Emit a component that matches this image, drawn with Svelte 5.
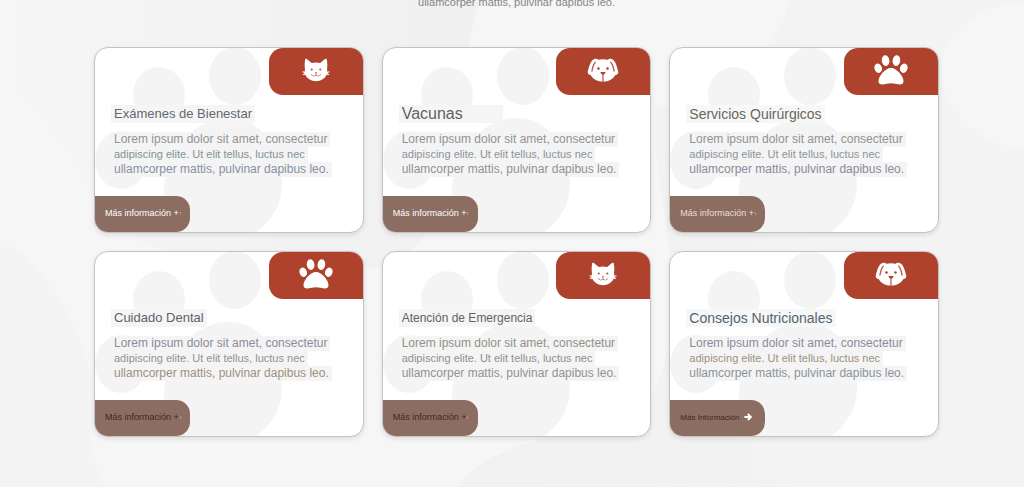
<script>
  const services = [
    { title: 'Exámenes de Bienestar', icon: 'cat', heading: 'slate', lines: ['gray', 'teal', 'blue'], button: 'light', label: 'Más información +' },
    { title: 'Vacunas', icon: 'dog', heading: 'neutral wide', lines: ['gray', 'slate', 'gray'], button: 'light', label: 'Más información +' },
    { title: 'Servicios Quirúrgicos', icon: 'paw', heading: 'brown tint', lines: ['gray', 'slate', 'violet'], button: 'soft', label: 'Más información +' },
    { title: 'Cuidado Dental', icon: 'paw', heading: 'violet', lines: ['violet', 'gray', 'sand'], button: 'dark', label: 'Más información +' },
    { title: 'Atención de Emergencia', icon: 'cat', heading: 'neutral narrow', lines: ['olive', 'green', 'gray'], button: 'dark', label: 'Más información +' },
    { title: 'Consejos Nutricionales', icon: 'dog', heading: 'navy tint', lines: ['violet', 'sand', 'slate'], button: 'dark next', label: 'Más Información', arrow: true }
  ];
  const copy = [
    'Lorem ipsum dolor sit amet, consectetur',
    'adipiscing elite. Ut elit tellus, luctus nec',
    'ullamcorper mattis, pulvinar dapibus leo.'
  ];
</script>

<main>
  <svg class="backdrop" viewBox="0 0 1024 487" preserveAspectRatio="none" aria-hidden="true">
    <defs>
      <linearGradient id="band" x1="0" x2="1" y1="0" y2="0">
        <stop offset="0" stop-color="#f6f6f6" />
        <stop offset="1" stop-color="#f0f0f0" />
      </linearGradient>
      <linearGradient id="low" x1="0" x2="1" y1="0" y2="0">
        <stop offset="0" stop-color="#f1f1f1" />
        <stop offset="1" stop-color="#f4f4f4" />
      </linearGradient>
    </defs>
    <path d="M0 0H480C464 50 462 90 462 130C460 200 420 262 372 268C250 260 150 262 130 232C90 200 60 120 0 80Z" fill="url(#band)" />
    <path d="M790 0C780 50 730 85 655 110C650 200 700 300 650 400C570 440 490 440 457 487H1024V150C950 140 925 70 950 40C970 15 990 4 1024 3V0Z" fill="url(#low)" />
    <path d="M0 240C60 270 110 380 90 436C92 460 100 475 106 487H0Z" fill="#f4f4f4" />
  </svg>

  <p class="intro">ullamcorper mattis, pulvinar dapibus leo.</p>

  <section class="grid">
    {#each services as service}
      <article class="card">
        <svg class="watermark" viewBox="0 0 190 188" width="190" height="188" aria-hidden="true">
          <ellipse cx="64" cy="47" rx="26" ry="28" />
          <ellipse cx="140" cy="28" rx="26" ry="29" />
          <ellipse cx="26" cy="112" rx="26" ry="29" />
          <path d="M70 190C68 172 68 156 69 140C73 99 101 70 134 70C166 70 187 100 187 136C187 156 178 172 158 187V190Z" />
        </svg>
        <div class="badge">
          {#if service.icon === 'cat'}
            <svg viewBox="0 0 28 24" width="28" height="24" aria-hidden="true">
              <path fill="#fff" d="M3.2 1.2C3.6.3 4.6.7 5.2 1.3L9.6 4.9Q14 4 18.2 4.9L22.6 1.3C23.3.6 24.3.4 24.7 1.2C25.6 4.8 25.4 8 25 11.3Q25.4 12.6 25.3 13.8L27.5 13.3V14.2L25.3 15L27.4 16.4L27 17.1L24.6 16.8C22.8 21 18.4 23.2 14 23.2S5.2 21 3.4 16.8L1 17.1L.6 16.4L2.7 15L.5 14.2V13.3L2.7 13.8Q2.6 12.6 3 11.3C2.6 8 2.4 4.8 3.2 1.2Z" />
              <circle cx="9.7" cy="11.5" r="1.1" fill="#b65542" />
              <circle cx="18.3" cy="11.5" r="1.1" fill="#b65542" />
              <path d="M12.8 14.3H15.2L14 15.8Z" fill="#b65542" />
              <path d="M14 15.5V17M9.2 16.8Q11.5 19.4 14 17.2Q16.5 19.4 18.8 16.8" fill="none" stroke="#c8705e" stroke-width=".8" stroke-linecap="round" />
            </svg>
          {:else if service.icon === 'dog'}
            <svg viewBox="0 0 32 24" width="32" height="24" aria-hidden="true">
              <path fill="#fff" d="M8 .8C9.4.5 10.6 1 11.2 1.7Q16 .6 20.8 1.7C21.4 1 22.6.5 24 .8C28.7 2 30 9 31.3 14C31.5 15.5 30.2 17 28.4 17C26 21.4 21 23.6 16 23.6S6 21.4 3.6 17C1.8 17 .4 15.5.7 14C2 9 3.3 2 8 .8Z" />
              <path d="M8.3 4.2C6.2 6 5.7 9.5 4.9 13M23.7 4.2C25.8 6 26.3 9.5 27.1 13" fill="none" stroke="#b9553f" stroke-width="1.3" stroke-linecap="round" />
              <circle cx="11.5" cy="10.5" r="1.3" fill="#a9442f" />
              <circle cx="20.5" cy="10.5" r="1.3" fill="#a9442f" />
              <path d="M13.5 14H18.5C18.7 15.2 17 16.7 16 16.7S13.3 15.2 13.5 14Z" fill="#a9442f" />
              <path d="M16 16V23.6" stroke="#a9442f" stroke-width="1.1" />
            </svg>
          {:else}
            <svg viewBox="0 0 34 30" width="34" height="30" aria-hidden="true">
              <g fill="#fff">
                <ellipse cx="4.2" cy="13.2" rx="3.7" ry="4.8" transform="rotate(-18 4.2 13.2)" />
                <ellipse cx="11.6" cy="5.7" rx="3.8" ry="5.4" transform="rotate(-8 11.6 5.7)" />
                <ellipse cx="22.4" cy="5.7" rx="3.8" ry="5.4" transform="rotate(8 22.4 5.7)" />
                <ellipse cx="29.8" cy="13.2" rx="3.7" ry="4.8" transform="rotate(18 29.8 13.2)" />
                <path d="M17 13C23 13 29.5 21.5 29.5 26C29.5 32 22 28.3 17 28.3S4.5 32 4.5 26C4.5 21.5 11 13 17 13Z" />
              </g>
            </svg>
          {/if}
        </div>
        <div class="body">
          <h3 class={service.heading}>{service.title}</h3>
          <p>
            {#each copy as line, i}
              <span class={service.lines[i]}>{line}</span>
            {/each}
          </p>
        </div>
        <button type="button" class={service.button}>
          {service.label}
          {#if service.arrow}
            <svg viewBox="0 0 8 8" width="8" height="8" aria-hidden="true">
              <path d="M.4 4H6.5M3.8 1L6.8 4L3.8 7" fill="none" stroke="#fff" stroke-width="2" />
            </svg>
          {:else}
            <i class="tick"></i>
          {/if}
        </button>
      </article>
    {/each}
  </section>
</main>

<style>
  :global(body) {
    background: #f6f6f6;
  }
  main {
    position: relative;
    min-height: 100vh;
    box-sizing: border-box;
    padding: 0 85px 50px 94px;
    overflow: hidden;
    font-family: "Liberation Sans", Arial, sans-serif;
  }
  .backdrop {
    position: absolute;
    inset: 0;
    width: 100%;
    height: 100%;
  }
  .intro {
    position: relative;
    margin: -5px 0 37px;
    color: #858585;
    font-size: 11px;
    line-height: 15px;
    text-align: center;
  }
  .grid {
    position: relative;
    display: grid;
    grid-template-columns: repeat(3, minmax(0, 1fr));
    gap: 18px;
  }
  .card {
    position: relative;
    display: flex;
    flex-direction: column;
    align-items: flex-start;
    overflow: hidden;
    border: 1px solid #c3c3c3;
    border-radius: 14px;
    background: #fff;
    box-shadow: 0 2px 5px rgba(0, 0, 0, 0.1);
  }
  .watermark {
    position: absolute;
    top: 0;
    left: 0;
    fill: #f4f4f4;
  }
  .badge {
    display: flex;
    align-items: center;
    justify-content: center;
    align-self: flex-end;
    box-sizing: border-box;
    width: 94px;
    height: 47px;
    padding-bottom: 4px;
    border-radius: 14px 0 0 14px;
    background: #af422d;
  }
  .body {
    position: relative;
    padding: 10px 16px 0;
  }
  h3 {
    width: fit-content;
    margin: 0 0 9px;
    padding: 0 3px;
    background: #f5f5f5;
    font-size: 13px;
    font-weight: 400;
    line-height: 18px;
    white-space: nowrap;
  }
  h3.wide {
    padding-right: 40px;
    font-size: 16px;
  }
  h3.narrow {
    font-size: 12px;
  }
  h3.tint {
    background: #f5f8f7;
    font-size: 14px;
  }
  p {
    margin: 0;
  }
  .body span {
    display: block;
    width: fit-content;
    padding: 0 3px;
    background: #f4f4f4;
    font-size: 12px;
    line-height: 15px;
    white-space: nowrap;
  }
  .body span:nth-child(2) {
    font-size: 11px;
  }
  .gray { color: #929292; }
  .teal { color: #829395; }
  .blue { color: #8791a2; }
  .slate { color: #8b939c; }
  .violet { color: #8b8b9a; }
  .sand { color: #9c9181; }
  .olive { color: #929087; }
  .green { color: #8b928b; }
  h3.slate { color: #626873; }
  h3.neutral { color: #626262; }
  h3.brown { color: #6c655d; }
  h3.violet { color: #60606c; }
  h3.navy { color: #566272; }
  button {
    position: relative;
    display: flex;
    align-items: center;
    gap: 1px;
    width: 95px;
    height: 36px;
    margin-top: 19px;
    padding: 0 0 2px 10px;
    border: 0;
    border-radius: 0 14px 14px 0;
    background: #8c6d62;
    font-family: inherit;
    font-size: 9px;
    white-space: nowrap;
  }
  button.light { color: #fff; }
  button.soft { color: #e9dedb; }
  button.dark { color: #3b2a25; }
  button.next {
    gap: 5px;
    font-size: 8px;
  }
  .tick {
    width: 1px;
    height: 3px;
    background: #c7905f;
  }
</style>
